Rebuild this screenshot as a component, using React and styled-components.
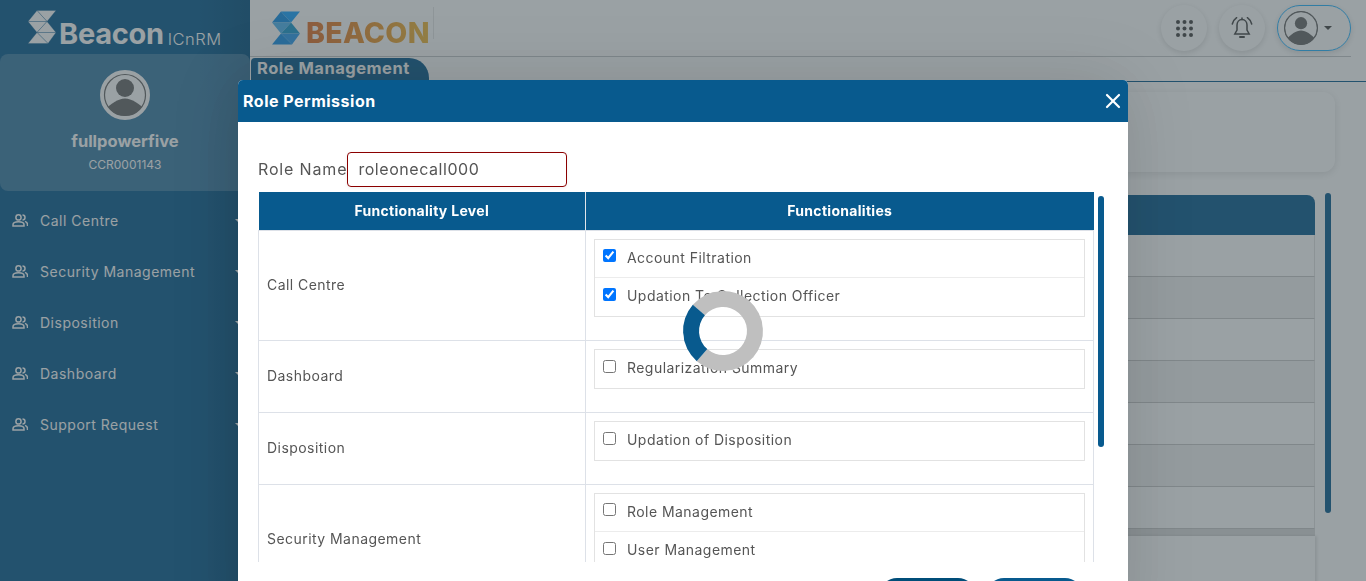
import React from 'react'
import styled, { createGlobalStyle } from 'styled-components'
import { X } from 'lucide-react'

const FONT = `Inter, "Open Sans", "Liberation Sans", sans-serif`

const GlobalStyle = createGlobalStyle`
  html, body {
    margin: 0;
    height: 100%;
    overflow: hidden;
    background: #fff;
    font-family: ${FONT};
  }
  * { box-sizing: border-box; }
`

const Shell = styled.div`
  display: flex;
  height: 100vh;
  overflow: hidden;
`

const Sidebar = styled.aside`
  width: 250px;
  flex-shrink: 0;
  color: #fff;
  background: linear-gradient(90deg, #085a8e 0%, #085a8e 80%, #04507f 100%);
`

const Brand = styled.div`
  height: 54px;
  display: flex;
  align-items: flex-start;
  padding: 10px 0 0 28px;
`

const BrandName = styled.span`
  font-size: 29px;
  font-weight: 700;
  line-height: 34px;
  letter-spacing: -0.3px;
  margin-left: 3px;
  margin-top: 7px;
`

const BrandSuffix = styled.span`
  font-size: 16.5px;
  font-weight: 300;
  line-height: 20px;
  margin: 19px 0 0 4px;
  letter-spacing: 0.5px;
`

const ProfileCard = styled.div`
  height: 137px;
  border-radius: 8px;
  background: rgba(255, 255, 255, 0.2);
  display: flex;
  flex-direction: column;
  align-items: center;
  padding-top: 16px;
`

const ProfileName = styled.div`
  font-size: 16.5px;
  font-weight: 700;
  line-height: 20px;
  margin-top: 11px;
`

const ProfileCode = styled.div`
  font-size: 12px;
  line-height: 16px;
  margin-top: 6px;
`

const Menu = styled.nav`
  display: flex;
  flex-direction: column;
`

const MenuItem = styled.div`
  height: 51px;
  display: flex;
  align-items: center;
  padding: 8px 7px 0 12px;
  font-size: 14px;
  letter-spacing: 0.5px;
  gap: 12px;
  &::after {
    content: '';
    margin-left: auto;
    border-top: 4px solid #fff;
    border-left: 4px solid transparent;
    border-right: 4px solid transparent;
  }
`

const Main = styled.main`
  flex: 1;
  min-width: 0;
`

const TopBar = styled.header`
  height: 57px;
  margin-right: 15px;
  border-bottom: 1px solid #c6c9cb;
  display: flex;
  align-items: center;
  padding-left: 22px;
`

const LogoText = styled.span`
  font-size: 28.5px;
  font-weight: 800;
  margin: 9px 0 0 6px;
  letter-spacing: 0.3px;
  line-height: 36px;
  background: linear-gradient(90deg, #e2702c 0%, #ec9a2e 60%, #f0b93a 100%);
  -webkit-background-clip: text;
  background-clip: text;
  color: transparent;
`

const LogoDivider = styled.span`
  width: 1px;
  height: 32px;
  margin: 0 0 11px 3px;
  background: #e6e6e6;
`

const TopActions = styled.div`
  margin-left: auto;
  display: flex;
  align-items: center;
  gap: 12px;
`

const RoundButton = styled.div`
  width: 46px;
  height: 46px;
  border-radius: 50%;
  background: #fff;
  box-shadow: 0 2px 6px rgba(0, 0, 0, 0.14);
  display: flex;
  align-items: center;
  justify-content: center;
`

const ProfilePill = styled.div`
  width: 74px;
  height: 46px;
  border-radius: 23px;
  border: 1px solid #25b3ff;
  box-shadow: 0 2px 6px rgba(0, 0, 0, 0.14);
  display: flex;
  align-items: center;
  padding-left: 6px;
  gap: 6px;
  &::after {
    content: '';
    border-top: 4px solid #444;
    border-left: 4px solid transparent;
    border-right: 4px solid transparent;
  }
`

const TabRow = styled.div`
  height: 25px;
  border-bottom: 1px solid #085a8e;
  padding: 1px 0 0 1px;
`

const Tab = styled.div`
  width: 178px;
  height: 23px;
  background: #085a8e;
  color: #fff;
  border-radius: 4px 20px 0 0;
  font-size: 16.5px;
  font-weight: 700;
  line-height: 21px;
  padding-left: 6px;
  letter-spacing: 0.5px;
  white-space: nowrap;
`

const Content = styled.div`
  padding: 10px 31px 0 10px;
`

const FilterCard = styled.div`
  height: 80px;
  border-radius: 12px;
  background: #fff;
  box-shadow: 0 2px 8px rgba(0, 0, 0, 0.12);
`

const ListArea = styled.div`
  display: flex;
  gap: 10px;
  margin: 21px 4px 0 0;
`

const ListColumn = styled.div`
  flex: 1;
  min-width: 0;
`

const ListHead = styled.div`
  height: 40px;
  margin-top: 2px;
  background: #085a8e;
  border-radius: 8px 8px 0 0;
`

const ListRow = styled.div`
  height: 42px;
  border-bottom: 1px solid #c8c8c8;
  border-right: 1px solid #e2e2e2;
  background: ${(props) => (props.$even ? '#f3f3f3' : '#fff')};
`

const ListGap = styled.div`
  height: 7px;
  background: #dcdcdc;
`

const ListFoot = styled.div`
  height: 60px;
  background: #fff;
  box-shadow: 2px 0 3px rgba(0, 0, 0, 0.12);
`

const PageScroll = styled.div`
  width: 6px;
  height: 320px;
  border-radius: 3px;
  background: #085a8e;
  flex-shrink: 0;
`

const Overlay = styled.div`
  position: fixed;
  inset: 0;
  background: rgba(61, 75, 80, 0.52);
  display: flex;
  justify-content: center;
  padding-top: 80px;
`

const Modal = styled.div`
  position: relative;
  width: 890px;
  height: 560px;
  background: #fff;
  border-radius: 5px 5px 0 0;
  box-shadow: 0 0 70px rgba(0, 0, 0, 0.14);
  flex-shrink: 0;
`

const ModalHeader = styled.div`
  height: 42px;
  background: #085a8e;
  border-radius: 5px 5px 0 0;
  color: #fff;
  display: flex;
  align-items: center;
  justify-content: space-between;
  padding: 0 3px 0 5px;
  font-size: 16px;
  font-weight: 700;
  letter-spacing: 0.5px;
`

const ModalBody = styled.div`
  padding: 30px 0 0 20px;
`

const RoleRow = styled.div`
  display: flex;
  align-items: center;
  height: 35px;
  color: #555;
  font-size: 16px;
  letter-spacing: 0.85px;
  padding-bottom: 1px;
`

const RoleInput = styled.input`
  width: 220px;
  height: 35px;
  flex-shrink: 0;
  margin: 1px 0 0 0;
  padding: 0 10px 1px;
  border: 1px solid #8b0000;
  border-radius: 4px;
  font-family: ${FONT};
  font-size: 16px;
  letter-spacing: 0.55px;
  color: #555;
  outline: none;
  box-shadow: 0 1px 4px rgba(0, 0, 0, 0.06);
`

const TableArea = styled.div`
  display: flex;
  gap: 4px;
  margin-top: 5px;
  height: 370px;
`

const TableClip = styled.div`
  width: 836px;
  height: 370px;
  overflow: hidden;
  flex-shrink: 0;
`

const Table = styled.table`
  width: 836px;
  border-collapse: collapse;
  table-layout: fixed;
`

const HeadCell = styled.th`
  height: 38px;
  padding: 0;
  background: #085a8e;
  color: #fff;
  font-size: 14px;
  font-weight: 700;
  letter-spacing: 0.3px;
  border-right: 1px solid #e1e5ea;
  &:last-child { border-right: 0; }
`

const LevelCell = styled.td`
  border: 1px solid #dde1e8;
  padding: 0 0 2px 8px;
  color: #555;
  font-size: 14px;
  letter-spacing: 0.45px;
`

const ItemsCell = styled.td`
  border: 1px solid #dde1e8;
  padding: 8px 8px 23px 8px;
  vertical-align: top;
`

const ItemList = styled.div`
  border: 1px solid #e2e2e2;
`

const Item = styled.label`
  display: flex;
  align-items: center;
  height: 38px;
  padding: 0 0 2px 8px;
  color: #555;
  font-size: 14px;
  letter-spacing: 0.45px;
  &:not(:last-child) { border-bottom: 1px solid #ececec; }
`

const Check = styled.input`
  width: 13px;
  height: 13px;
  margin: 0 11px 3px 0;
`

const ModalScroll = styled.div`
  width: 6px;
  height: 251px;
  margin-top: 4px;
  border-radius: 3px;
  background: #085a8e;
`

const ModalFooter = styled.div`
  display: flex;
  justify-content: flex-end;
  gap: 12px;
  padding: 16px 46px 0 0;
`

const FooterButton = styled.button`
  width: 95px;
  height: 34px;
  border: 0;
  border-radius: 17px;
  background: ${(props) => (props.$dark ? '#004d79' : '#085a8e')};
`

const Spinner = styled.div`
  position: absolute;
  left: 445px;
  top: 211px;
  width: 80px;
  height: 80px;
  border-radius: 50%;
  border: 16px solid #bfbfbf;
  border-left-color: #085a8e;
  transform: rotate(-4deg);
`

const menu = ['Call Centre', 'Security Management', 'Disposition', 'Dashboard', 'Support Request']

const permissions = [
  { level: 'Call Centre', items: [['Account Filtration', true], ['Updation To Collection Officer', true]] },
  { level: 'Dashboard', items: [['Regularization Summary', false]] },
  { level: 'Disposition', items: [['Updation of Disposition', false]] },
  { level: 'Security Management', items: [['Role Management', false], ['User Management', false]] },
]

function LogoMark({ colors, line }) {
  const facets = [
    '9,0 28,0 19,11',
    '9,0 19,11 0,11',
    '0,11 19,11 9,22',
    '9,22 19,11 28,22',
    '9,22 28,22 20,33',
    '9,22 20,33 0,33',
  ]
  return (
    <svg width="28" height="34" viewBox="0 0 28 33">
      {facets.map((points, i) => (
        <polygon key={points} points={points} fill={colors[i]} stroke={line} strokeWidth={line ? 0.3 : 0} />
      ))}
    </svg>
  )
}

function Avatar({ id, size, ring, stroke, inner }) {
  return (
    <svg width={size} height={size} viewBox="0 0 50 50">
      <defs>
        <clipPath id={id}>
          <circle cx="25" cy="25" r={inner} />
        </clipPath>
      </defs>
      <circle cx="25" cy="25" r={25 - ring / 2} fill="#fff" stroke={stroke} strokeWidth={ring} />
      <circle cx="25" cy="25" r={inner} fill="none" stroke="#666" strokeWidth="1.2" />
      <g clipPath={`url(#${id})`}>
        <circle cx="25" cy="18" r="9" fill="#666" />
        <path d="M3 42 C10 34 18 28.5 25 28.5 C32 28.5 40 34 47 42 V50 H3 Z" fill="#666" />
      </g>
    </svg>
  )
}

function GroupIcon() {
  return (
    <svg width="16" height="13" viewBox="0 0 16 13" fill="none" stroke="currentColor" strokeWidth="1.5" style={{ flexShrink: 0 }}>
      <circle cx="6.5" cy="3.4" r="2.6" />
      <path d="M1 12v-1.3c0-2 2.5-3 5.5-3s5.5 1 5.5 3V12z" />
      <path d="M10.5 1a2.5 2.5 0 0 1 0 5" />
      <path d="M13 7.4c1.6.5 2.5 1.6 2.5 3V12" />
    </svg>
  )
}

function GridIcon() {
  const dots = [2, 8.5, 15]
  return (
    <svg width="17" height="17" viewBox="0 0 17 17">
      {dots.map((y) => dots.map((x) => <circle key={`${x}-${y}`} cx={x} cy={y} r="2" fill="#444" />))}
    </svg>
  )
}

function BellIcon() {
  return (
    <svg width="22" height="22" viewBox="0 0 22 22" fill="none" stroke="#444" strokeWidth="1.5" strokeLinecap="round">
      <path d="M11 2.5c-3 0-5 2.5-5 5.5v5L3.8 17h14.4L16 13V8c0-3-2-5.5-5-5.5z" />
      <path d="M11 1v1.5" />
      <path d="M9 20h4" strokeWidth="2" />
      <path d="M1.3 7c.7-2.6 2.2-4.8 4.3-6.3" />
      <path d="M20.7 7c-.7-2.6-2.2-4.8-4.3-6.3" />
    </svg>
  )
}

export default function App() {
  return (
    <>
      <GlobalStyle />
      <Shell>
        <Sidebar>
          <Brand>
            <LogoMark line="#085a8e" colors={['#fff', '#fff', '#fff', '#fff', '#fff', '#fff']} />
            <BrandName>Beacon</BrandName>
            <BrandSuffix>ICnRM</BrandSuffix>
          </Brand>
          <ProfileCard>
            <Avatar id="card-face" size={50} ring={4} stroke="#fff" inner={20.5} />
            <ProfileName>fullpowerfive</ProfileName>
            <ProfileCode>CCR0001143</ProfileCode>
          </ProfileCard>
          <Menu>
            {menu.map((label) => (
              <MenuItem key={label}>
                <GroupIcon />
                {label}
              </MenuItem>
            ))}
          </Menu>
        </Sidebar>
        <Main>
          <TopBar>
            <LogoMark colors={['#15a2ff', '#0f8fe8', '#4fb4f0', '#1b9ad0', '#2a9cf0', '#1590e8']} />
            <LogoText>BEACON</LogoText>
            <LogoDivider />
            <TopActions>
              <RoundButton><GridIcon /></RoundButton>
              <RoundButton><BellIcon /></RoundButton>
              <ProfilePill><Avatar id="top-face" size={34} ring={1.5} stroke="#666" inner={24} /></ProfilePill>
            </TopActions>
          </TopBar>
          <TabRow>
            <Tab>Role Management</Tab>
          </TabRow>
          <Content>
            <FilterCard />
            <ListArea>
              <ListColumn>
                <ListHead />
                {[0, 1, 2, 3, 4, 5, 6].map((row) => <ListRow key={row} $even={row % 2 === 1} />)}
                <ListGap />
                <ListFoot />
              </ListColumn>
              <PageScroll />
            </ListArea>
          </Content>
        </Main>
      </Shell>
      <Overlay>
        <Modal>
          <ModalHeader>
            Role Permission
            <X size={24} strokeWidth={2.2} />
          </ModalHeader>
          <ModalBody>
            <RoleRow>
              Role Name
              <RoleInput readOnly value="roleonecall000" />
            </RoleRow>
            <TableArea>
              <TableClip>
                <Table>
                  <colgroup>
                    <col style={{ width: 327 }} />
                    <col />
                  </colgroup>
                  <thead>
                    <tr>
                      <HeadCell>Functionality Level</HeadCell>
                      <HeadCell>Functionalities</HeadCell>
                    </tr>
                  </thead>
                  <tbody>
                    {permissions.map((group) => (
                      <tr key={group.level}>
                        <LevelCell>{group.level}</LevelCell>
                        <ItemsCell>
                          <ItemList>
                            {group.items.map(([name, checked]) => (
                              <Item key={name}>
                                <Check type="checkbox" readOnly checked={checked} />
                                {name}
                              </Item>
                            ))}
                          </ItemList>
                        </ItemsCell>
                      </tr>
                    ))}
                  </tbody>
                </Table>
              </TableClip>
              <ModalScroll />
            </TableArea>
          </ModalBody>
          <ModalFooter>
            <FooterButton $dark aria-label="Cancel" />
            <FooterButton aria-label="Save" />
          </ModalFooter>
          <Spinner />
        </Modal>
      </Overlay>
    </>
  )
}
